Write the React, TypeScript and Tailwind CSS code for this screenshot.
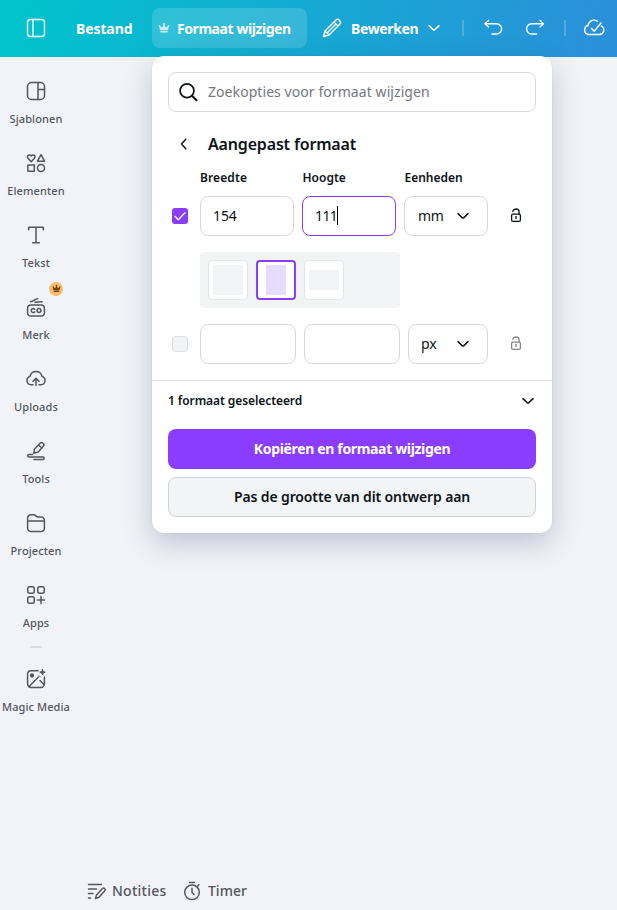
import type { ReactNode } from "react";

type IconProps = { children: ReactNode; className?: string; size?: number; width?: number };

function Icon({ children, className = "", size = 24, width = 1.5 }: IconProps) {
  return (
    <svg
      width={size}
      height={size}
      viewBox="0 0 24 24"
      fill="none"
      stroke="currentColor"
      strokeWidth={width}
      strokeLinecap="round"
      strokeLinejoin="round"
      className={"shrink-0 " + className}
    >
      {children}
    </svg>
  );
}

const crownPath =
  "M5.500 21h13a1 1 0 0 0 1-1v-2h-15v2c0 .5.400 1 1 1ZM4.200 16.500 2 9a1.700 1.700 0 1 1 2.600-.5L8.300 11l2.600-5.300a2 2 0 1 1 2.200 0l2.600 5.300 3.700-2.500A1.700 1.700 0 1 1 22 9l-2.200 7.500Z";

function Crown({ size, className = "" }: { size: number; className?: string }) {
  return (
    <svg width={size} height={size} viewBox="0 0 24 24" fill="currentColor" className={"shrink-0 " + className}>
      <path d={crownPath} />
    </svg>
  );
}

function Chevron({ className = "" }: { className?: string }) {
  return (
    <Icon size={16} width={2.3} className={className}>
      <path d="m4.500 8.500 6.800 6.500q.7.600 1.400 0l6.800-6.500" />
    </Icon>
  );
}

function Lock({ className = "" }: { className?: string }) {
  return (
    <svg width="16" height="16" viewBox="0 0 16 16" fill="none" stroke="currentColor" className={"shrink-0 " + className}>
      <rect x="3.600" y="6.100" width="8.800" height="7.300" rx="1.300" strokeWidth="1.300" />
      <path d="M4.700 3.300C5.300 1.700 6.500 1 8 1c2 0 3.100 1.300 3.100 3v2.100" strokeWidth="1.300" strokeLinecap="round" />
      <path d="M8 8.300v3M7.300 8.700h1.400" strokeWidth="1.200" />
    </svg>
  );
}

function SideItem({ label, icon, badge = false }: { label: string; icon: ReactNode; badge?: boolean }) {
  return (
    <div className="relative flex h-[72px] w-[72px] flex-col items-center pt-[22px] text-[#53565c]">
      {icon}
      <span className="mt-2 whitespace-nowrap text-[11px] leading-4 font-medium tracking-[0.1px]">{label}</span>
      {badge && (
        <span className="absolute top-[9px] left-[49px] flex h-[14px] w-[14px] items-center justify-center rounded-full bg-[#fdbc68] text-[#6b4310]">
          <Crown size={9} className="-mt-px" />
        </span>
      )}
    </div>
  );
}

function Sidebar() {
  return (
    <nav className="flex w-[72px] flex-col">
      <SideItem
        label="Sjablonen"
        icon={<Icon><rect x="3.500" y="3.500" width="17" height="17" rx="4" /><path d="M14 3.500v17M14 10.500h6.500" /></Icon>}
      />
      <SideItem
        label="Elementen"
        icon={
          <Icon>
            <path d="M7.200 10.700 4 7.200C2.400 5.300 4.900 2.300 7.200 4.900c2.300-2.600 4.800.4 3.200 2.300ZM17 3.700l3.500 6.500h-7Z" />
            <rect x="3.900" y="13.900" width="6.400" height="6.400" />
            <circle cx="17" cy="17" r="3.500" />
          </Icon>
        }
      />
      <SideItem
        label="Tekst"
        icon={<Icon><path d="M4.700 6.800V4.300h14.600v2.500M12 4.300v15.400M8.700 19.700h6.600" /></Icon>}
      />
      <SideItem
        label="Merk"
        badge
        icon={
          <Icon>
            <rect x="3.600" y="10" width="16.800" height="11" rx="3.300" />
            <path d="M10.700 14.200a2 2 0 1 0 0 2.700" />
            <circle cx="15" cy="15.500" r="1.900" />
            <path d="M6.500 6.700C10 6.500 10.500 3.700 13.800 3.700M11 7.200c3 .2 4.500-.8 7-.2" />
          </Icon>
        }
      />
      <SideItem
        label="Uploads"
        icon={
          <Icon>
            <path d="M9 17.800H7a4.300 4.300 0 0 1-1-8.400 6.100 6.100 0 0 1 12 0 4.300 4.300 0 0 1-1 8.400h-2M12 18.500v-7M9 14.200l3-3 3 3" />
          </Icon>
        }
      />
      <SideItem
        label="Tools"
        icon={
          <Icon>
            <path d="m9.700 14.300.8-4.300 5.600-5.800c1.800-1.800 5 .9 3.400 2.900l-5.300 5.900ZM14.400 6l3.600 3M8.500 15.500H5a1.300 1.300 0 0 0 0 2.600h14a1.100 1.100 0 0 1 0 2.300H10" />
          </Icon>
        }
      />
      <SideItem
        label="Projecten"
        icon={
          <Icon>
            <path d="M3.600 10V7A3.300 3.300 0 0 1 7 3.700h2.200c3 0 2.300 2.300 5.300 2.300h2.600a3.300 3.300 0 0 1 3.300 3.300v7.900a3.300 3.300 0 0 1-3.300 3.300H7a3.300 3.300 0 0 1-3.400-3.300V10h16.800" />
          </Icon>
        }
      />
      <SideItem
        label="Apps"
        icon={
          <Icon>
            <rect x="3.700" y="3.700" width="6.600" height="6.600" rx="2" />
            <rect x="13.700" y="3.700" width="6.600" height="6.600" rx="2" />
            <rect x="3.700" y="13.700" width="6.600" height="6.600" rx="2" />
            <path d="M17 13.500v7M13.500 17h7" />
          </Icon>
        }
      />
      <div className="mx-auto mt-[13px] h-[2px] w-3 bg-[#d9dce4]" />
      <div className="-mt-[3px]">
        <SideItem
          label="Magic Media"
          icon={
            <Icon>
              <path d="M14 3.700H7A3.400 3.400 0 0 0 3.600 7v10A3.400 3.400 0 0 0 7 20.400h10a3.400 3.400 0 0 0 3.400-3.400v-6.500M5 19.500l9.500-9.500M16 13.500l4 4.300" />
              <circle cx="8" cy="8.500" r="1.400" fill="currentColor" />
              <path d="m18.500 2.500.7 2 2.100.7-2.100.8-.7 2-.8-2-2-.8 2-.7ZM15 8.500l1.500 1.500M20 9l.5.500" fill="currentColor" strokeWidth=".9" />
            </Icon>
          }
        />
      </div>
    </nav>
  );
}

function Header() {
  return (
    <header className="flex h-[57px] shrink-0 items-center bg-[linear-gradient(100deg,#00c4cc_0%,#2b8fda_100%)] pb-px text-[14px] font-bold text-white">
      <Icon className="ml-6" width={1.4}><rect x="3.500" y="3.500" width="17" height="17" rx="3" /><path d="M9 3.500v17" /></Icon>
      <span className="ml-7 w-[76px] whitespace-nowrap tracking-[-0.1px]">Bestand</span>
      <div className="flex h-10 w-[155px] items-center rounded-lg bg-white/15 pl-[6px]">
        <Crown size={12} className="opacity-75" />
        <span className="ml-[7px] whitespace-nowrap tracking-[-0.43px]">Formaat wijzigen</span>
      </div>
      <Icon className="ml-[13px]" width={1.400}><path d="m3.500 20.500 1.500-5.500L16 4c2-2 6 1.700 4 4L9 19ZM14 6l4 4M5 15l4 4M15.500 8.500l-7.500 7.500" /></Icon>
      <span className="ml-[7px] w-[75px] whitespace-nowrap tracking-[-0.35px]">Bewerken</span>
      <Chevron />
      <i className="ml-5 h-4 w-[2px] bg-white/20" />
      <Icon className="ml-[17px]" width={1.400}><path d="M7.500 4.500 4 7.700l3.500 3.200M4.200 7.700h11.300a5.100 5.100 0 0 1 0 10.300H11" /></Icon>
      <Icon className="ml-[18px]" width={1.400}><path d="m17 4.500 3.500 3.200-3.500 3.200M20.300 7.700H8.700a5.100 5.100 0 0 0 0 10.300H13.500" /></Icon>
      <i className="ml-[17px] h-4 w-[2px] bg-white/20" />
      <Icon className="ml-4" width={1.400}><path d="M15.500 5.300A6 6 0 0 0 6 9.500a4.600 4.600 0 0 0 .8 9h10.500a4.500 4.500 0 0 0 2-8.500M9.500 12.500l2.700 2.700L19 7" /></Icon>
    </header>
  );
}

const field = "flex h-10 items-center rounded-lg border border-[#d7d9df] bg-white text-[14px] ";

function ResizePanel() {
  return (
    <section className="absolute top-14 left-[152px] flex h-[477px] w-[400px] flex-col rounded-xl bg-white pt-4 text-[#0e1318] shadow-[0_0_1px_rgba(64,87,109,0.2),0_10px_28px_rgba(40,55,100,0.25)]">
      <div className={field + "mx-4 pl-[7px]"}>
        <Icon width={1.700}><circle cx="11" cy="10.700" r="6.900" /><path d="m16.200 16 4.300 4.300" strokeWidth="2" /></Icon>
        <span className="ml-2 whitespace-nowrap pb-px text-[14px] tracking-[0.07px] text-[#74777d]">Zoekopties voor formaat wijzigen</span>
      </div>
      <div className="mt-5 flex h-6 items-center pl-6">
        <Icon size={16} width={2.200}><path d="m14.800 5-6 6.300q-.6.700 0 1.400l6 6.300" /></Icon>
        <h2 className="ml-4 whitespace-nowrap text-[16px] font-semibold tracking-[-0.17px]">Aangepast formaat</h2>
      </div>
      <div className="mt-[13px] flex h-[18px] items-center pl-12 text-[12px] font-semibold">
        <span className="w-[102.500px] tracking-[0.1px]">Breedte</span>
        <span className="w-[102px]">Hoogte</span>
        <span>Eenheden</span>
      </div>
      <div className="mt-[9px] flex items-center gap-2 pl-5">
        <span className="mr-1 flex h-4 w-4 items-center justify-center rounded-[3px] bg-[#8b3dff] text-white">
          <Icon size={16} width={2}><path d="m4.500 12.500 5 5 10-10.500" /></Icon>
        </span>
        <div className={field + "w-[94px] pb-px pl-3 tracking-[-0.1px]"}>154</div>
        <div className="flex h-10 w-[94px] items-center rounded-lg border border-[#8b3dff] pb-px pl-3 text-[14px] tracking-[-0.6px]">
          111<i className="h-[19px] w-px bg-black" />
        </div>
        <div className={field + "w-[84px] justify-between pr-4 pl-[13px]"}><span className="pb-px tracking-[-0.3px]">mm</span><Chevron /></div>
        <Lock className="ml-3" />
      </div>
      <div className="mt-4 ml-12 flex h-14 w-[200px] gap-2 rounded bg-[#f2f3f5] p-2">
        <div className="flex h-10 w-10 items-center justify-center rounded border border-[#e4e5e9] bg-white"><i className="h-[30px] w-[30px] bg-[#f2f3f5]" /></div>
        <div className="flex h-10 w-10 items-center justify-center rounded border-2 border-[#8b3dff] bg-white"><i className="h-[30px] w-5 bg-[#e7dbff]" /></div>
        <div className="flex h-10 w-10 items-center justify-center rounded border border-[#e4e5e9] bg-white"><i className="h-5 w-[30px] bg-[#f2f3f5]" /></div>
      </div>
      <div className="mt-4 flex items-center gap-2 pl-5">
        <span className="mr-1 h-4 w-4 rounded-[3px] border border-[#dcdde1] bg-[#f2f3f5]" />
        <div className={field + "w-24"} />
        <div className={field + "w-24"} />
        <div className={field + "w-20 justify-between pr-4 pl-3"}><span className="pb-px">px</span><Chevron /></div>
        <Lock className="ml-3 opacity-50" />
      </div>
      <div className="mt-4 flex h-[41px] items-center justify-between border-t border-[#dfe0e3] px-4 text-[12px] font-semibold">
        <span className="tracking-[-0.08px]">1 formaat geselecteerd</span>
        <Chevron />
      </div>
      <div className="mt-2 flex flex-col gap-2 px-4 text-[14px]">
        <button className="h-10 rounded-lg bg-[#8b3dff] pb-[2px] font-bold tracking-[-0.34px] text-white">Kopiëren en formaat wijzigen</button>
        <button className="h-10 rounded-lg border border-[#cfd1d8] bg-[#f2f4f6] pb-[2px] font-semibold tracking-[-0.12px]">Pas de grootte van dit ontwerp aan</button>
      </div>
    </section>
  );
}

function Footer() {
  return (
    <footer className="mt-auto flex h-[38px] items-center pl-[84px] text-[14px] font-medium text-[#53565c]">
      <Icon><path d="M4.500 5.500h13M4.500 10h8M4.500 14.500h4.500M4.500 19h2M11.500 19.500l1-3.500 6-6.500c1.200-1.300 3.500.8 2.300 2.200L15 18.200Z" /></Icon>
      <span className="ml-1 w-[54px] whitespace-nowrap pb-px tracking-[0.25px]">Notities</span>
      <Icon className="ml-[14px]"><circle cx="12" cy="13.300" r="7.300" /><path d="M9.700 3.500h4.600M12 9.300v4.200l2 2M17.700 7l1.200-1.200" /></Icon>
      <span className="ml-1 whitespace-nowrap pb-px">Timer</span>
    </footer>
  );
}

export default function App() {
  return (
    <div className="relative flex h-[910px] w-[617px] flex-col overflow-hidden bg-[#f2f3f8] font-['Noto_Sans',sans-serif]">
      <Header />
      <Sidebar />
      <Footer />
      <ResizePanel />
    </div>
  );
}
